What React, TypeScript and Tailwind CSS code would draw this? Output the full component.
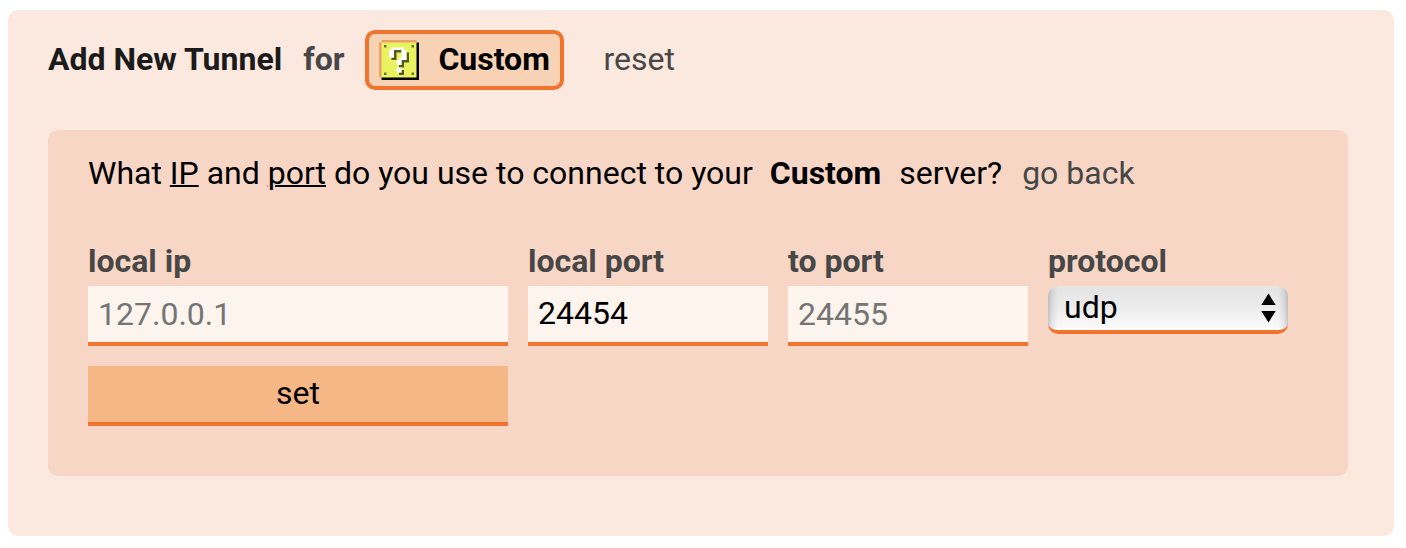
const BLOCK_ROWS = [
  ".OOOOOOOOOOOOOO.",
  "OYYYYYYYYYYYYYYK",
  "OYDYYYYYYYYYYDYK",
  "OYYYYWWWWWYYYYYK",
  "OYYYWWBBBWWYYYYK",
  "OYYYWWBYYWWBYYYK",
  "OYYYWWBYYWWBYYYK",
  "OYYYYBBYWWWBYYYK",
  "OYYYYYYWWBBBYYYK",
  "OYYYYYYWWBYYYYYK",
  "OYYYYYYYBBYYYYYK",
  "OYYYYYYWWYYYYYYK",
  "OYYYYYYWWBYYYYYK",
  "OYDYYYYYBBYYYDYK",
  "OYYYYYYYYYYYYYYK",
  ".KKKKKKKKKKKKKKK",
];

const BLOCK_COLORS: Record<string, string> = {
  O: "#eaa55c",
  Y: "#e8f35f",
  K: "#000000",
  D: "#6c7038",
  W: "#ffffff",
  B: "#555925",
};

/** One path per colour keeps neighbouring cells free of seams. */
function QuestionBlock() {
  return (
    <svg className="size-10" viewBox="0 0 16 16" aria-hidden="true">
      <path d="M1 1h14v14H1z" fill={BLOCK_COLORS.Y} />
      <path d="M1 0h14v1H1v14H0V1h1z" fill={BLOCK_COLORS.O} />
      <path d="M15 1h1v15H1v-1h14z" fill={BLOCK_COLORS.K} />
      {["D", "B", "W"].map((color) => (
        <path
          key={color}
          fill={BLOCK_COLORS[color]}
          d={BLOCK_ROWS.map((row, y) =>
            [...row].map((c, x) => (c === color ? `M${x} ${y}h1v1h-1z` : "")).join(""),
          ).join("")}
        />
      ))}
    </svg>
  );
}

const inputClass =
  "block h-[60px] w-full rounded-none border-b-4 border-[#f1742e] bg-[#fdf4ee] px-2.5 text-black outline-none placeholder:text-[#757575]";

type FieldProps = { label: string; placeholder?: string; value?: string };

function Field({ label, placeholder, value }: FieldProps) {
  return (
    <label className="block">
      <span className="block h-[46px] pt-px font-bold text-[#474747]">{label}</span>
      <input className={value ? `${inputClass} pb-0.5` : inputClass} placeholder={placeholder} defaultValue={value} />
    </label>
  );
}

export default function App() {
  return (
    <div className="h-[548px] bg-white pt-2.5 pr-3 pl-2 font-['Roboto',sans-serif] text-[32px] leading-10 text-black">
      <main className="h-[526px] rounded-[10px] bg-[#fbe8de] px-10 pt-5">
        <header className="flex h-[60px] items-center">
          <h1 className="pb-0.5 font-bold text-[#1b1b1b]">Add New Tunnel</h1>
          <span className="ml-[21px] pb-0.5 font-bold text-[#474747]">for</span>
          <div className="ml-[21px] flex h-[60px] w-[199px] items-center rounded-[10px] border-4 border-[#f1742e] bg-[#f7d2b5] pl-2.5">
            <QuestionBlock />
            <span className="ml-[19px] pb-0.5 font-bold">Custom</span>
          </div>
          <button className="ml-[39px] pb-0.5 text-[#474747]">reset</button>
        </header>

        <section className="mt-10 h-[346px] w-[1300px] rounded-[10px] bg-[#f7d6c6] px-10 pt-[23px]">
          <p className="flex whitespace-pre">
            <span>
              What <u className="decoration-2">IP</u> and <u className="decoration-2">port</u> do you use to connect to your
            </span>
            <b className="ml-[17px]">Custom</b>
            <span className="ml-[18px]">server?</span>
            <button className="ml-5 text-[#474747]">go back</button>
          </p>

          <form className="mt-[47px] grid grid-cols-[420px_240px_240px_240px] gap-x-5 gap-y-5" onSubmit={(e) => e.preventDefault()}>
            <Field label="local ip" placeholder="127.0.0.1" />
            <Field label="local port" value="24454" />
            <Field label="to port" placeholder="24455" />
            <label className="block">
              <span className="block h-[46px] pt-px font-bold text-[#474747]">protocol</span>
              <span className="relative block">
                <select
                  className="block h-12 w-full appearance-none rounded-[10px] border-b-4 border-[#f1742e] bg-[linear-gradient(to_right,#00000030,#00000012_4px,#00000000_10px,#00000000_230px,#00000012_236px,#00000030),linear-gradient(to_bottom,#e5e5e5_10%,#ececec_50%,#fcfcfc)] pb-0.5 pl-4 text-black outline-none"
                  defaultValue="udp"
                >
                  <option>udp</option>
                </select>
                <svg className="pointer-events-none absolute top-[7px] right-3 h-[30px] w-[15px]" viewBox="0 0 15 30">
                  <path d="M7.5 0.5 14.7 12H.3ZM.3 18h14.4L7.5 29.5Z" />
                </svg>
              </span>
            </label>
            <button className="h-[60px] border-b-4 border-[#f1742e] bg-[#f5b786] pb-0.5">set</button>
          </form>
        </section>
      </main>
    </div>
  );
}
